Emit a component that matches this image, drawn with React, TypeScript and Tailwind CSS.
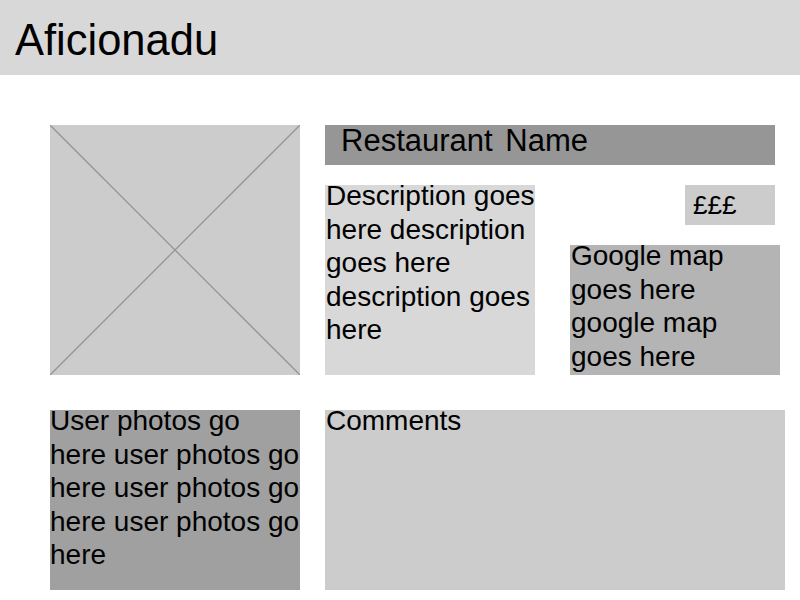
import React from "react";

const font = { fontFamily: '"Liberation Sans", Arial, sans-serif' };

export default function App() {
  return (
    <div className="w-[800px] h-[600px] bg-white text-black overflow-hidden" style={font}>
      <header className="h-[75px] bg-[#d8d8d8] pl-[15px] pt-[16px]">
        <h1 className="text-[43.5px] leading-[49px] font-normal">Aficionadu</h1>
      </header>
      <main className="pl-[50px] pt-[50px]">
        <div className="flex gap-[25px]">
          <div className="w-[250px] h-[250px] bg-[#cccccc] shrink-0">
            <svg width="250" height="250" viewBox="0 0 250 250" className="block">
              <line x1="0" y1="0" x2="250" y2="250" stroke="#959595" strokeWidth="1.3" />
              <line x1="250" y1="0" x2="0" y2="250" stroke="#959595" strokeWidth="1.3" />
            </svg>
          </div>
          <div className="flex flex-col">
            <div className="w-[450px] h-[40px] bg-[#969696] pl-[16px]">
              <div className="text-[31px] leading-none [word-spacing:4px]">Restaurant Name</div>
            </div>
            <div className="flex mt-[20px] gap-[35px]">
              <div className="w-[210px] h-[190px] bg-[#d8d8d8] pl-[1px] text-[28px] leading-[33.5px]">
                <p className="-mt-[6px]">Description goes here description goes here description goes here</p>
              </div>
              <div className="w-[210px] flex flex-col">
                <div className="ml-[115px] w-[90px] h-[40px] bg-[#cccccc] pl-[8px] text-[26px] leading-[40px]">£££</div>
                <div className="mt-[20px] w-[210px] h-[130px] bg-[#b4b4b4] pl-[1px] text-[28px] leading-[33.5px]">
                  <p className="-mt-[6px]">Google map goes here google map goes here</p>
                </div>
              </div>
            </div>
          </div>
        </div>
        <div className="flex gap-[25px] mt-[35px]">
          <div className="w-[250px] h-[180px] bg-[#a0a0a0] text-[28px] leading-[33.5px] shrink-0">
            <p className="-mt-[6px]">User photos go here user photos go here user photos go here user photos go here</p>
          </div>
          <div className="w-[460px] h-[180px] bg-[#cccccc] pl-[1px] text-[28px] leading-[33.5px]">
            <p className="-mt-[6px]">Comments</p>
          </div>
        </div>
      </main>
    </div>
  );
}
